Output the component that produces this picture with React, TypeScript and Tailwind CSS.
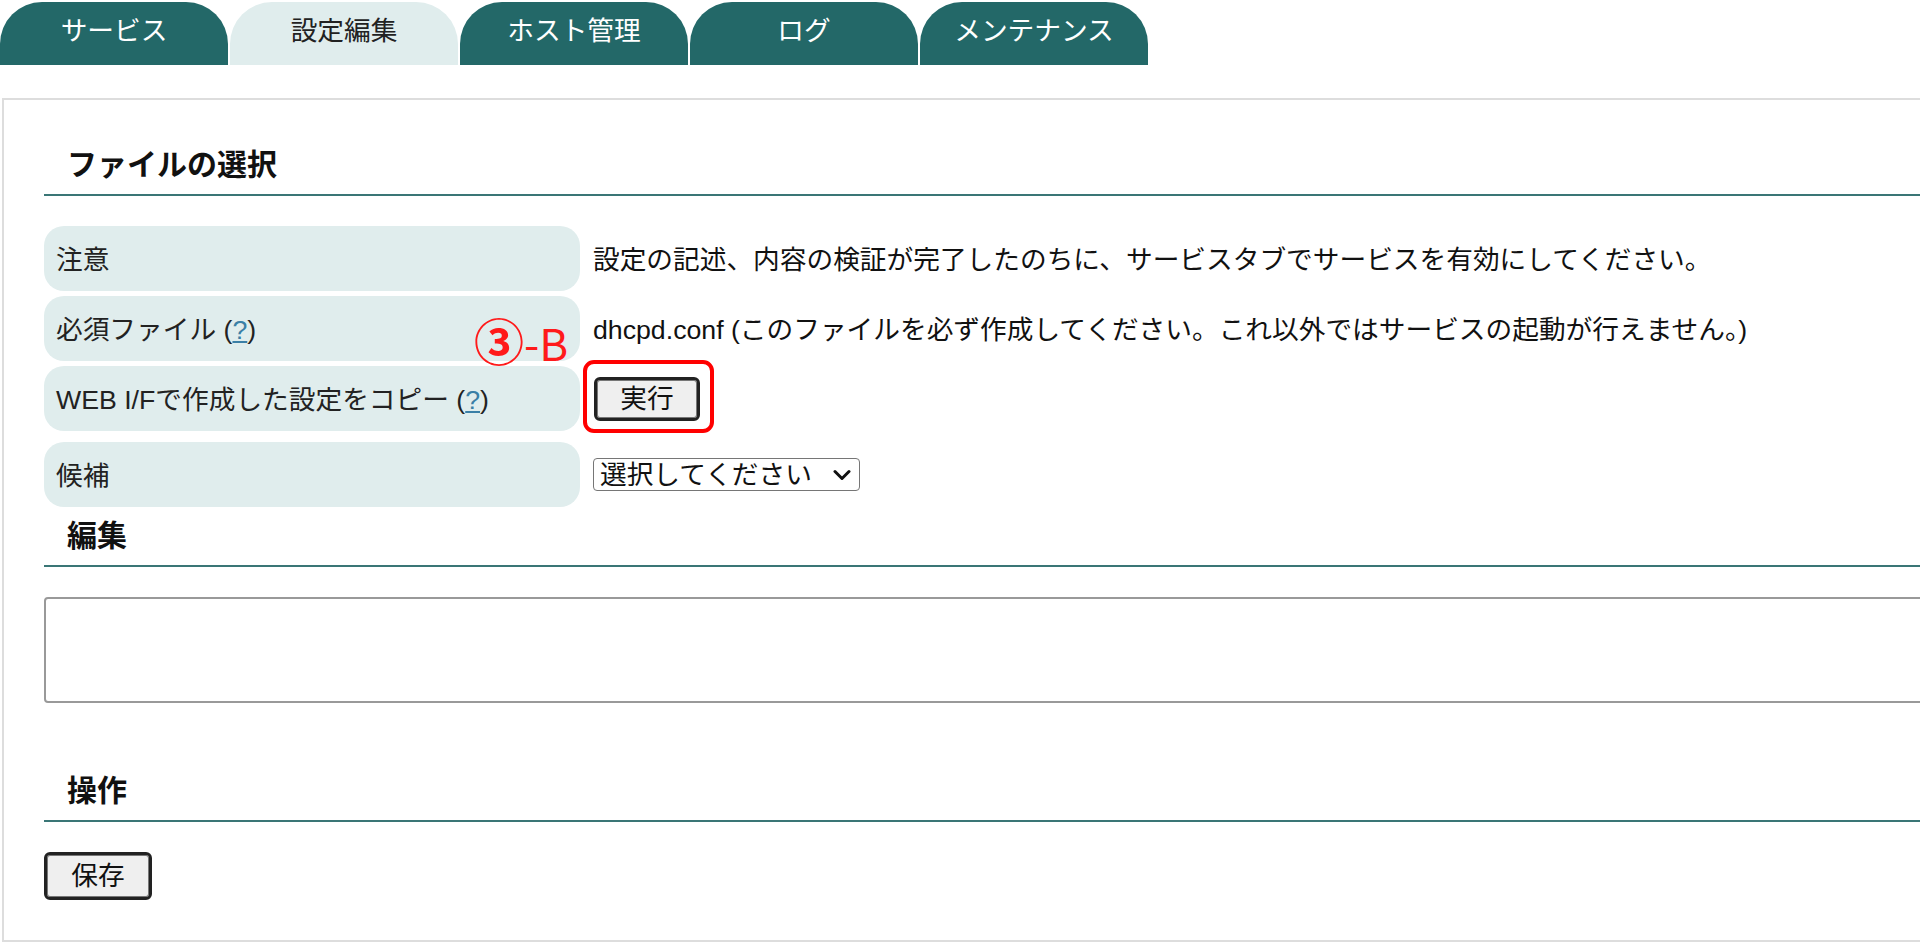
import * as React from "react";

const tabs = ["サービス", "設定編集", "ホスト管理", "ログ", "メンテナンス"];

const font = "font-['Liberation_Sans','Noto_Sans_CJK_JP',sans-serif]";

const Help = () => (
  <>
    {" ("}
    <span className="text-[#3a7fa6] underline">?</span>
    {")"}
  </>
);

const SectionHeading: React.FC<{ title: string; className?: string }> = ({ title, className }) => (
  <div className={`border-b-2 border-[#3a7676] pb-[11px] pl-[23px] ${className ?? ""}`}>
    <h2 className="text-[30px] font-bold leading-[36px] text-[#111]">{title}</h2>
  </div>
);

const Label: React.FC<{ children: React.ReactNode }> = ({ children }) => (
  <div className="flex h-[65px] items-center rounded-[20px] bg-[#e0eded] px-3 pt-[4px] text-[#222]">
    {children}
  </div>
);

const GrayButton: React.FC<{ text: string; className?: string }> = ({ text, className }) => (
  <button
    type="button"
    className={`rounded-[6px] border-[3px] border-[#222] bg-[#efefef] text-[26.7px] leading-[36px] text-[#111] shadow-[inset_0_0_0_1px_#777] ${className ?? ""}`}
  >
    {text}
  </button>
);

export default function App() {
  return (
    <div className={`h-[952px] w-full overflow-hidden bg-white ${font} text-[26.7px] text-[#111]`}>
      {/* tab bar */}
      <div className="mt-[2px] flex gap-[2px]">
        {tabs.map((t, i) => (
          <div
            key={t}
            className={`flex h-[63px] w-[228px] justify-center rounded-t-[42px] pt-[11px] leading-[36px] ${
              i === 1 ? "bg-[#e0eded] text-[#222]" : "bg-[#236868] text-white"
            }`}
          >
            {t}
          </div>
        ))}
      </div>

      {/* panel */}
      <div className="ml-[2px] mt-[33px] w-[1990px] border-2 border-[#dddddd] pb-[40px] pl-[40px] pt-[47px]">
        <SectionHeading title="ファイルの選択" />

        <div className="relative mt-[30px] grid grid-cols-[536px_1fr] gap-x-[13px] gap-y-[5px]">
          <Label>注意</Label>
          <div className="flex items-center pt-[4px]">
            設定の記述、内容の検証が完了したのちに、サービスタブでサービスを有効にしてください。
          </div>

          <Label>
            必須ファイル
            <Help />
          </Label>
          <div className="flex items-center pt-[4px]">
            dhcpd.conf (このファイルを必ず作成してください。これ以外ではサービスの起動が行えません。)
          </div>

          <Label>
            WEB I/Fで作成した設定をコピー
            <Help />
          </Label>
          <div className="flex items-center">
            <GrayButton text="実行" className="ml-[1px] h-[44px] w-[106px]" />
          </div>

          <div className="mt-[6px]">
            <Label>候補</Label>
          </div>
          <div className="mt-[6px] flex items-center">
            <div className="flex h-[33px] w-[267px] items-center justify-between rounded-[4px] border border-[#767676] bg-white pl-[6px] pr-[8px] leading-[30px]">
              <span>選択してください</span>
              <svg width="18" height="12" viewBox="0 0 18 12" fill="none">
                <path d="M2 2.5 9 9.5 16 2.5" stroke="#111" strokeWidth="3" strokeLinecap="round" strokeLinejoin="round" />
              </svg>
            </div>
          </div>

          {/* annotation overlay */}
          <div className="pointer-events-none absolute left-[430px] top-[86px] flex items-baseline text-[#ff1a1a] font-['Noto_Sans_CJK_JP',sans-serif]">
            <span className="text-[50px] font-bold leading-[54px]">③</span>
            <span className="text-[44px] leading-[54px]">-B</span>
          </div>
          <div className="pointer-events-none absolute left-[539px] top-[134px] h-[73px] w-[131px] rounded-[11px] border-4 border-[#ff0000]" />
        </div>

        <SectionHeading title="編集" className="mt-[11px]" />

        <textarea className="mt-[30px] block h-[106px] w-full resize-none rounded-[4px] border-2 border-[#999] bg-white" />

        <SectionHeading title="操作" className="mt-[70px]" />

        <GrayButton text="保存" className="mt-[30px] h-[48px] w-[108px]" />
      </div>
    </div>
  );
}
